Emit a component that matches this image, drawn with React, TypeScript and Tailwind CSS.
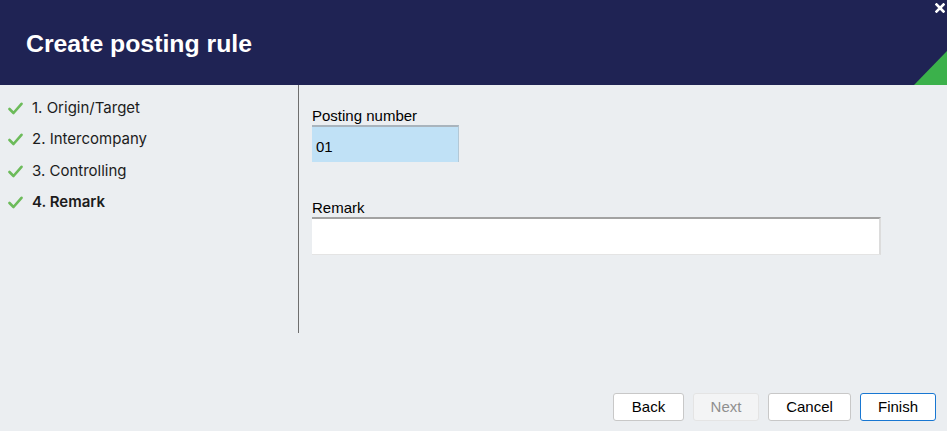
import React from "react";

const Check = () => (
  <svg width="15" height="13" viewBox="0 0 15 13" className="shrink-0">
    <path d="M1.5 7 L5.5 11 L13.5 1.8" fill="none" stroke="#6cbb5a" strokeWidth="2.6" strokeLinecap="round" strokeLinejoin="round" />
  </svg>
);

const steps = ["1. Origin/Target", "2. Intercompany", "3. Controlling", "4. Remark"];

export default function App() {
  return (
    <div className="w-[947px] h-[431px] flex flex-col bg-[#ebeef1] overflow-hidden" style={{ fontFamily: "Inter, 'Noto Sans', sans-serif" }}>
      <div className="relative h-[85px] shrink-0 bg-[#1f2354] flex items-center pl-[26px]">
        <h1 className="text-white text-[24.8px] font-bold pt-[2px]" style={{ fontFamily: "'Liberation Sans', Arial, sans-serif" }}>
          Create posting rule
        </h1>
        <svg className="absolute right-[2px] top-[3px]" width="10" height="10" viewBox="0 0 10 10">
          <path d="M1.5 1.5 L8.5 8.5 M8.5 1.5 L1.5 8.5" stroke="white" strokeWidth="2.6" strokeLinecap="square" />
        </svg>
        <svg className="absolute right-0 bottom-0" width="33" height="34" viewBox="0 0 33 34">
          <polygon points="0,34 33,0 33,34" fill="#3bb14b" />
        </svg>
      </div>
      <div className="flex flex-1">
        <div className="w-[299px] h-[248px] border-r border-[#6e6e6e] pt-[13px] flex flex-col gap-[11.5px]">
          {steps.map((s, i) => (
            <div key={s} className="flex items-center gap-[9px] pl-[8px] h-[20px]">
              <Check />
              <span className={`text-[15px] text-[#1c1c1c] ${i === 3 ? "font-semibold" : ""}`}>{s}</span>
            </div>
          ))}
        </div>
        <div className="flex-1 pl-[13px] pt-[22px]" style={{ fontFamily: "'Liberation Sans', Arial, sans-serif" }}>
          <div className="text-[15px] text-black leading-[18px]">Posting number</div>
          <div className="w-[147px] h-[37px] bg-[#c0e1f6] border-t-2 border-[#a9b4bd] border-r border-r-[#b3c8d6] flex items-center pl-[4px] pt-[5px] text-[15px] text-black">
            01
          </div>
          <div className="mt-[37px] text-[15px] text-black leading-[18px]">Remark</div>
          <div className="w-[569px] h-[38px] bg-white border-t-2 border-[#a2a2a2] border-r-2 border-r-[#dcdcdc] border-b border-b-[#e4e4e4]" />
        </div>
      </div>
      <div className="h-[38px] shrink-0 flex justify-end items-end gap-[9px] pr-[11px] mb-[10px]" style={{ fontFamily: "'Liberation Sans', Arial, sans-serif" }}>
        <button className="w-[71px] h-[28px] rounded-[3px] bg-white border border-[#c8c8c8] text-[15px] text-black">Back</button>
        <button className="w-[66px] h-[28px] rounded-[3px] bg-[#f3f4f5] border border-[#e4e4e4] text-[15px] text-[#8f8f8f]">Next</button>
        <button className="w-[83px] h-[28px] rounded-[3px] bg-white border border-[#c8c8c8] text-[15px] text-black">Cancel</button>
        <button className="w-[76px] h-[28px] rounded-[3px] bg-white border border-[#1877d2] text-[15px] text-black">Finish</button>
      </div>
    </div>
  );
}
